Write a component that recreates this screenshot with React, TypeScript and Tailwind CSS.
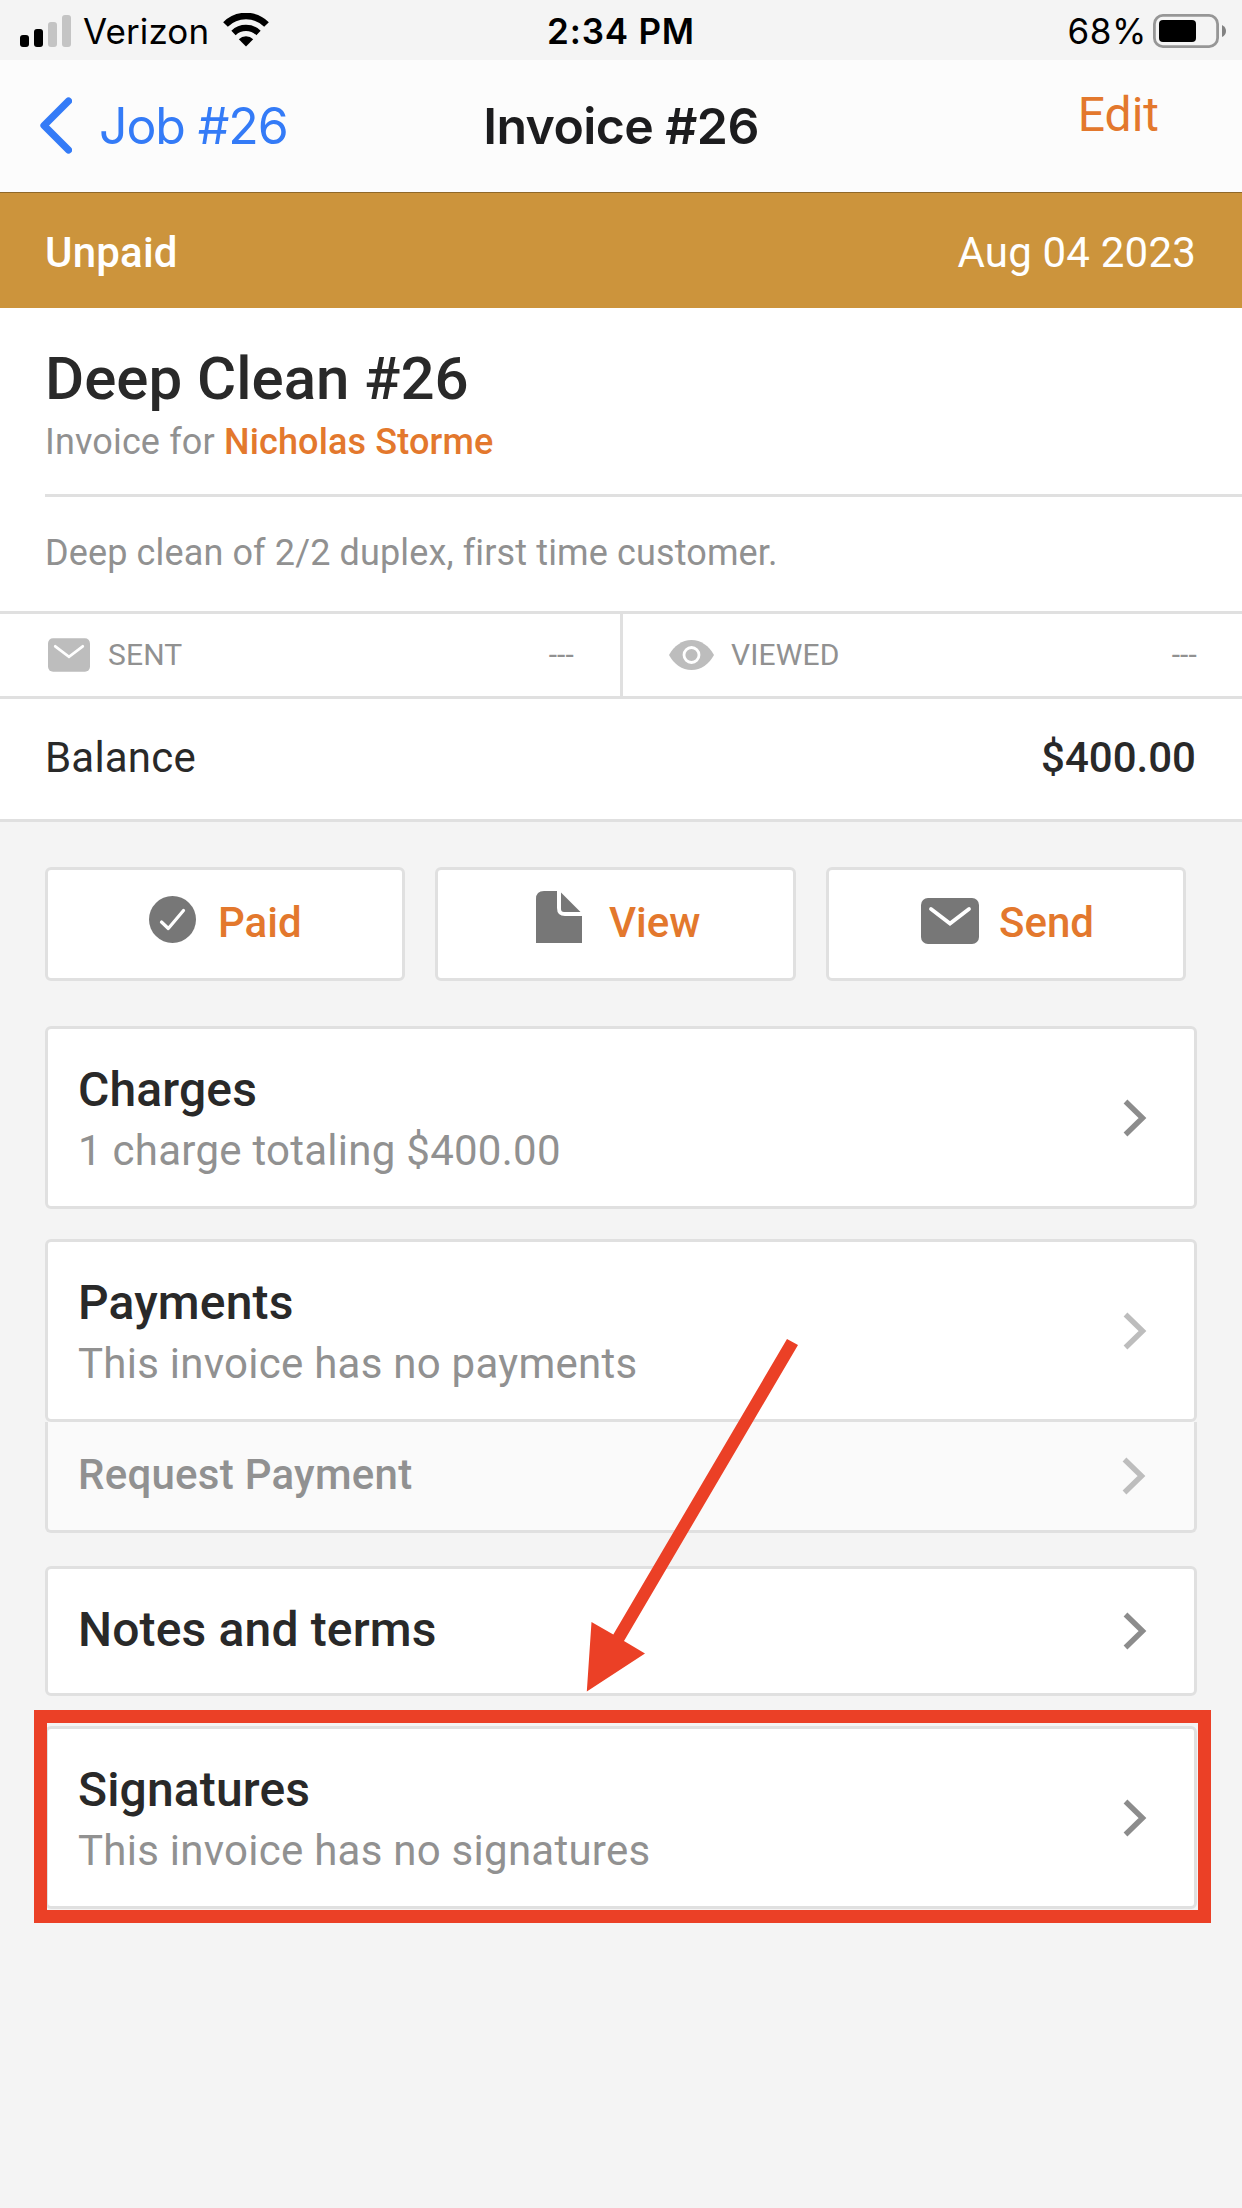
import type { ReactNode } from "react";

const ChevronRight = ({ className }: { className: string }) => (
  <svg viewBox="0 0 24 38" className={`w-6 h-[38px] ${className}`} fill="none">
    <path d="M2.5 2.5 L19.5 19 L2.5 35.5" stroke="currentColor" strokeWidth="5.4" />
  </svg>
);

const MailIcon = ({ className }: { className: string }) => (
  <svg viewBox="0 0 58 46" className={className}>
    <rect width="58" height="46" rx="7" fill="currentColor" />
    <path d="M10 11 L29 25.5 L48 11" fill="none" stroke="#fff" strokeWidth="3.8" strokeLinecap="round" />
  </svg>
);

const EyeIcon = () => (
  <svg viewBox="0 0 45 30" className="w-[45px] h-[30px] text-[#bdbdbd]">
    <path d="M0 15 C5 6 13 0 22.5 0 S40 6 45 15 C40 24 32 30 22.5 30 S5 24 0 15 Z" fill="currentColor" />
    <circle cx="22.5" cy="15" r="7.5" fill="none" stroke="#fff" strokeWidth="2.8" />
  </svg>
);

const CheckIcon = () => (
  <svg viewBox="0 0 47 47" className="-mt-[9px] w-[47px] h-[47px]">
    <circle cx="23.5" cy="23.5" r="23.5" fill="#777" />
    <path d="M12.5 26 L19.3 32.5 L34.5 14.5" fill="none" stroke="#fff" strokeWidth="3.2" strokeLinecap="round" strokeLinejoin="round" />
  </svg>
);

const DocIcon = () => (
  <svg viewBox="0 0 46 52" className="-mt-3.5 w-[46px] h-[52px]" fill="#777">
    <path d="M8 0 H21 V17 Q21 25 29 25 H46 V52 H0 V8 Q0 0 8 0 Z" />
    <path d="M25 1.5 L44.5 21 H28 Q25 21 25 18 Z" />
  </svg>
);

const StatusBar = () => (
  <div className="h-[60px] bg-[#f4f4f4] grid grid-cols-3 items-center font-['Inter',sans-serif] text-[35px] leading-[60px] text-black">
    <div className="flex items-center pl-5">
      <svg viewBox="0 0 51 32" className="w-[51px] h-8">
        <rect x="0" y="20" width="9" height="12" rx="3" />
        <rect x="14" y="14" width="9" height="18" rx="3" />
        <rect x="28" y="7" width="9" height="25" rx="3" fill="#c4c4c4" />
        <rect x="42" y="0" width="9" height="32" rx="3" fill="#c4c4c4" />
      </svg>
      <span className="ml-3 pt-px tracking-[0.1px]">Verizon</span>
      <svg viewBox="0 0 46 34" className="ml-3.5 w-[46px] h-[34px] -mt-px" fill="none" stroke="#000">
        <path d="M2.5 11.5 A29 29 0 0 1 43.5 11.5" strokeWidth="6.6" />
        <path d="M10.5 20 A18 18 0 0 1 35.5 20" strokeWidth="6.2" />
        <path d="M23 33.5 L15.8 26.2 A10.5 10.5 0 0 1 30.2 26.2 Z" fill="#000" stroke="none" />
      </svg>
    </div>
    <span className="pt-px text-center font-semibold tracking-[0.8px]">2:34 PM</span>
    <div className="flex items-center justify-end pr-[15px]">
      <span className="pt-px mr-1.5 tracking-[0.6px]">68%</span>
      <svg viewBox="0 0 74 34" className="w-[74px] h-[34px]">
        <rect x="1.4" y="1.4" width="63.2" height="31.2" rx="8.5" fill="none" stroke="#969696" strokeWidth="2.8" />
        <rect x="6" y="6" width="37" height="22" rx="4" />
        <path d="M69 11 Q73 13 73 17 T69 23 Z" fill="#828282" />
      </svg>
    </div>
  </div>
);

const NavBar = () => (
  <div className="h-[133px] bg-[#fcfcfc] border-b border-[#8f682a] grid grid-cols-[1fr_auto_1fr] font-['Inter',sans-serif] text-[50px] leading-[132px]">
    <div className="flex items-center pl-[39px] text-[#347bf7]">
      <svg viewBox="0 0 33 57" className="w-[33px] h-[57px] -mt-px" fill="none">
        <path d="M29.5 4 L5 28.5 L29.5 53" stroke="currentColor" strokeWidth="7.2" strokeLinecap="round" strokeLinejoin="round" />
      </svg>
      <span className="ml-[27px] tracking-[-1.1px]">Job #26</span>
    </div>
    <h1 className="font-semibold tracking-[-0.6px] text-[#1c1c1e]">Invoice #26</h1>
    <span className="pr-[83px] text-right font-['Roboto',sans-serif] text-5xl leading-[109px] text-[#e3782d]">Edit</span>
  </div>
);

const ActionButton = ({ icon, label, className }: { icon: ReactNode; label: string; className: string }) => (
  <button className={`h-[114px] flex items-center rounded-md border-3 border-[#e0e0e0] bg-white text-[42px] font-medium text-[#e3782d] ${className}`}>
    {icon}
    <span className="pb-1">{label}</span>
  </button>
);

const Card = ({ title, subtitle, muted }: { title: string; subtitle?: string; muted?: boolean }) => (
  <div className={`flex items-center justify-between rounded-md border-3 border-[#e0e0e0] bg-white pl-[30px] pr-[47px] ${subtitle ? "h-[183px]" : "h-[130px]"}`}>
    <div className={subtitle ? "pt-[5px]" : "pb-0.5"}>
      <h3 className="text-5xl leading-[60px] font-medium tracking-[0.15px] text-[#292929]">{title}</h3>
      {subtitle && <p className="text-[42px] leading-[61px] tracking-[0.26px] text-[#919191]">{subtitle}</p>}
    </div>
    <ChevronRight className={muted ? "text-[#bdbdbd]" : "text-[#8c8c8c]"} />
  </div>
);

const App = () => {
  return (
    <div className="relative w-[1242px] h-[2208px] overflow-hidden bg-[#f4f4f4] font-['Roboto',sans-serif] text-[#292929]">
      <StatusBar />
      <NavBar />

      <div className="h-[115px] flex items-center justify-between bg-[#cc943c] pl-[45px] pr-[46px] pt-1 text-[42px] tracking-[0.2px] text-white">
        <span className="font-medium">Unpaid</span>
        <span>Aug 04 2023</span>
      </div>

      {/* Invoice summary */}
      <section className="bg-white border-b-3 border-[#e0e0e0]">
        <div className="ml-[45px] h-[189px] pt-[39px] border-b-3 border-[#e0e0e0]">
          <h2 className="text-6xl leading-[63px] font-medium">Deep Clean #26</h2>
          <p className="mt-2.5 text-4xl leading-11 tracking-[0.15px] text-[#919191]">
            Invoice for <span className="font-medium text-[#e3782d]">Nicholas Storme</span>
          </p>
        </div>
        <p className="h-[114px] pl-[45px] text-4xl leading-[112px] tracking-[0.13px] text-[#919191]">
          Deep clean of 2/2 duplex, first time customer.
        </p>
        <div className="h-22 flex border-y-3 border-[#e0e0e0] text-3xl tracking-[0.15px] text-[#919191]">
          <div className="w-[623px] flex items-center border-r-3 border-[#e0e0e0] pl-12 pr-[46px]">
            <MailIcon className="w-[42px] h-[34px] text-[#bdbdbd]" />
            <span className="ml-[18px] flex-1">SENT</span>
            <span>---</span>
          </div>
          <div className="flex-1 flex items-center pl-[46px] pr-[45px]">
            <EyeIcon />
            <span className="ml-[17px] flex-1">VIEWED</span>
            <span>---</span>
          </div>
        </div>
        <div className="h-30 flex items-center justify-between pl-[45px] pr-[46px] pb-[3px] text-[42px]">
          <span className="tracking-[0.2px]">Balance</span>
          <span className="font-medium">$400.00</span>
        </div>
      </section>

      <div className="mt-[45px] ml-[45px] flex gap-[30px]">
        <ActionButton className="w-[360px] pl-[101px] gap-[22px]" icon={<CheckIcon />} label="Paid" />
        <ActionButton className="w-[361px] pl-[98px] gap-[27px]" icon={<DocIcon />} label="View" />
        <ActionButton className="w-[360px] pl-[92px] gap-5" icon={<MailIcon className="-mt-[7px] w-[58px] h-[46px] text-[#777]" />} label="Send" />
      </div>

      <div className="mt-[45px] mx-[45px] flex flex-col gap-[30px]">
        <Card title="Charges" subtitle="1 charge totaling $400.00" />
        <div>
          <Card title="Payments" subtitle="This invoice has no payments" muted />
          <div className="h-[111px] flex items-center justify-between rounded-b-md border-3 border-t-0 border-[#e0e0e0] bg-[#fafafa] pl-[30px] pr-12">
            <span className="pb-[3px] text-[42px] font-medium tracking-[0.26px] text-[#919191]">Request Payment</span>
            <ChevronRight className="text-[#bdbdbd]" />
          </div>
        </div>
        <div className="mt-[3px]">
          <Card title="Notes and terms" />
        </div>
        <Card title="Signatures" subtitle="This invoice has no signatures" />
      </div>

      {/* Callout drawn over the signatures card */}
      <div className="absolute left-[34px] top-[1710px] w-[1177px] h-[213px] border-[13px] border-[#eb4026]" />
      <svg viewBox="0 0 220 360" className="absolute left-[580px] top-[1335px] w-[220px] h-[360px]">
        <path d="M207 4 L218 10 L44 306 L65 318.5 L6.8 356.5 L11.5 287 L33.3 299.5 Z" fill="#eb4026" />
      </svg>
    </div>
  );
};

export default App;
